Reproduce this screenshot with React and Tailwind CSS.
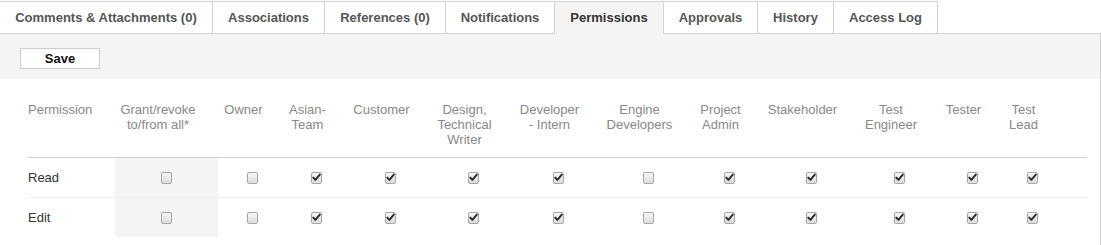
import React from "react";

const tabs = [
  { label: "Comments & Attachments (0)", w: "w-[213px]" },
  { label: "Associations", w: "w-[112px]" },
  { label: "References (0)", w: "w-[121px]" },
  { label: "Notifications", w: "w-[109px]" },
  { label: "Permissions", w: "w-[109px]", active: true },
  { label: "Approvals", w: "w-[94px]" },
  { label: "History", w: "w-[76px]" },
  { label: "Access Log", w: "w-[104px]" },
];

const cols = [
  { lines: ["Owner"], w: "w-[68px]", read: false, edit: false },
  { lines: ["Asian-", "Team"], w: "w-[60px]", read: true, edit: true },
  { lines: ["Customer"], w: "w-[88px]", read: true, edit: true },
  { lines: ["Design,", "Technical", "Writer"], w: "w-[78px]", read: true, edit: true },
  { lines: ["Developer", "- Intern"], w: "w-[92px]", read: true, edit: true },
  { lines: ["Engine", "Developers"], w: "w-[88px]", read: false, edit: false },
  { lines: ["Project", "Admin"], w: "w-[74px]", read: true, edit: true },
  { lines: ["Stakeholder"], w: "w-[90px]", read: true, edit: true },
  { lines: ["Test", "Engineer"], w: "w-[87px]", read: true, edit: true },
  { lines: ["Tester"], w: "w-[58px]", read: true, edit: true },
  { lines: ["Test", "Lead"], w: "w-[62px]", read: true, edit: true },
];

function Box({ checked }) {
  return (
    <span className="inline-flex w-[11px] h-[12px] rounded-[2px] border border-[#a6a6a6] bg-gradient-to-b from-[#f6f6f6] to-[#dcdcdc] items-center justify-center">
      {checked && (
        <svg width="9" height="9" viewBox="0 0 9 9">
          <path d="M1.3 4.6 L3.4 6.9 L7.8 1.6" fill="none" stroke="#2a2a2a" strokeWidth="1.9" strokeLinecap="round" strokeLinejoin="round" />
        </svg>
      )}
    </span>
  );
}

function Row({ label, field, last }) {
  return (
    <div className={`flex items-center ${last ? "h-[39px]" : "h-[40px] border-b border-[#efefef]"}`}>
      <div className="w-[87px] text-[13px] text-[#333] leading-[15px]">{label}</div>
      <div className="w-[103px] h-full bg-[#f4f4f4] flex items-center justify-center">
        <Box checked={false} />
      </div>
      {cols.map((c, i) => (
        <div key={i} className={`${c.w} flex items-center justify-center`}>
          <Box checked={c[field]} />
        </div>
      ))}
      <div className="w-[24px]" />
    </div>
  );
}

export default function App() {
  return (
    <div className="w-[1101px] bg-white font-['Liberation_Sans',Arial,sans-serif] pt-px">
      <div className="flex">
        {tabs.map((t) => (
          <div
            key={t.label}
            className={`${t.w} h-[33px] flex items-center justify-center border-t border-r border-[#d2d2d2] text-[13px] font-bold whitespace-nowrap ${
              t.active ? "bg-[#f4f4f4] text-[#333] border-b border-b-[#f4f4f4]" : "bg-white text-[#555] border-b"
            }`}
          >
            {t.label}
          </div>
        ))}
        <div className="flex-1 h-[33px] border-b border-[#d2d2d2]" />
      </div>
      <div className="border-r border-[#d2d2d2] pb-[8px]">
        <div className="bg-[#f4f4f4] h-[45px] px-5 pt-3">
          <button className="w-[80px] h-[21px] bg-white border border-[#cccccc] text-[13px] font-bold text-[#111] leading-[19px]">
            Save
          </button>
        </div>
        <div className="ml-[28px] w-[1059px] mt-[15px]">
          <div className="flex items-start pt-2 pb-[10px] border-b border-[#cfcfcf] text-[13px] leading-[15px] text-[#888]">
            <div className="w-[87px] text-left">Permission</div>
            <div className="w-[103px] pr-[17px] text-center whitespace-nowrap">
              Grant/revoke
              <br />
              to/from all*
            </div>
            {cols.map((c, i) => (
              <div key={i} className={`${c.w} pr-[17px] text-center whitespace-nowrap`}>
                {c.lines.map((l, j) => (
                  <div key={j}>{l}</div>
                ))}
              </div>
            ))}
            <div className="w-[24px]" />
          </div>
          <Row label="Read" field="read" />
          <Row label="Edit" field="edit" last />
        </div>
      </div>
    </div>
  );
}
